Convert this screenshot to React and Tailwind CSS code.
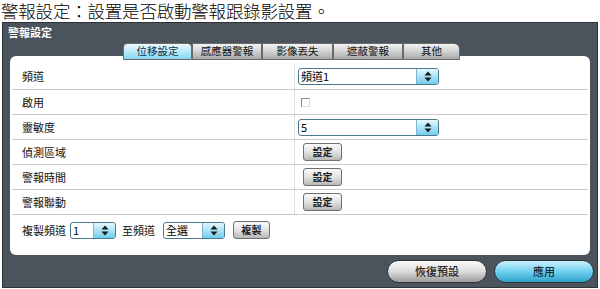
import React from "react";

const font = { fontFamily: '"Noto Sans CJK TC", "Noto Sans", sans-serif' };

function Arrows() {
  return (
    <svg width="8" height="11" viewBox="0 0 8 11">
      <path d="M4 0.5 L7.5 4.5 L0.5 4.5 Z" fill="#1a1a1a" />
      <path d="M4 10.5 L7.5 6.5 L0.5 6.5 Z" fill="#1a1a1a" />
    </svg>
  );
}

function Select({ value, w }) {
  return (
    <div
      className="flex h-[17px] items-stretch overflow-hidden rounded-[3px] border border-[#4a7890] bg-white"
      style={{ width: w }}
    >
      <div className="flex flex-1 items-center pl-[2px] text-[11px] leading-none text-black">{value}</div>
      <div className="flex w-[22px] items-center justify-center border-l border-[#7fb6cc] bg-gradient-to-b from-[#e6f8ff] via-[#a9e3f7] to-[#6fcdef]">
        <Arrows />
      </div>
    </div>
  );
}

function SmallBtn({ label, w = "w-[39px]" }) {
  return (
    <div
      className={`flex h-[18px] ${w} items-center justify-center rounded-[3px] border border-[#6e6e6e] bg-gradient-to-b from-[#fbfbfb] via-[#e2e2e2] to-[#b8b8b8] text-[10px] font-bold leading-none text-[#222]`}
    >
      {label}
    </div>
  );
}

function Row({ label, children, first }) {
  return (
    <div className={`flex ${first ? "h-[26px]" : "h-[25px]"} border-b border-[#c9c9c9]`}>
      <div className="flex w-[283px] items-center border-r border-[#dedede] pl-[10px] text-[11px] text-[#111]">
        {label}
      </div>
      <div className="flex flex-1 items-center">{children}</div>
    </div>
  );
}

const tabs = [
  { t: "位移設定", w: 69, active: true },
  { t: "感應器警報", w: 70 },
  { t: "影像丟失", w: 71 },
  { t: "遮蔽警報", w: 70 },
  { t: "其他", w: 57 },
];

export default function App() {
  return (
    <div className="h-[289px] w-[600px] overflow-hidden bg-white" style={font}>
      <div className="h-[22px] whitespace-nowrap pl-[1px] text-[17.5px] font-light leading-[21px] tracking-[-0.2px] text-black">
        警報設定：設置是否啟動警報跟錄影設置。
      </div>
      <div className="ml-[2px] flex h-[266px] w-[596px] flex-col border border-[#2e3339] bg-[#4b535c]">
        <div className="h-[20px] pl-[5px] pt-[3px] text-[11px] font-bold leading-[13px] text-white">警報設定</div>
        <div className="relative z-10 -mb-[4px] ml-[120px] flex h-[17px]">
          {tabs.map((tab, i) => (
            <div
              key={i}
              className={`flex items-center justify-center border border-[#6a6a6a] text-[10.5px] leading-none text-[#111] ${
                tab.active
                  ? "rounded-t-[4px] bg-gradient-to-b from-[#eefaff] via-[#b9e9fa] to-[#86d5f1] text-[#10314a]"
                  : "bg-gradient-to-b from-[#f2f2f2] via-[#d2d2d2] to-[#a9a9a9]"
              } ${i === tabs.length - 1 ? "rounded-tr-[6px]" : ""}`}
              style={{ width: tab.w }}
            >
              {tab.t}
            </div>
          ))}
        </div>
        <div className="mx-[7px] flex h-[199px] flex-col rounded-[6px] bg-white px-[2px] pt-[8px]">
          <Row label="頻道" first>
            <div className="pl-[3px]">
              <Select value="頻道1" w={141} />
            </div>
          </Row>
          <Row label="啟用">
            <div className="ml-[6px] h-[9px] w-[9px] border border-[#8a8a8a] border-r-[#d8d8d8] border-b-[#d8d8d8] bg-white" />
          </Row>
          <Row label="靈敏度">
            <div className="pl-[3px]">
              <Select value="5" w={141} />
            </div>
          </Row>
          <Row label="偵測區域">
            <div className="pl-[8px]">
              <SmallBtn label="設定" />
            </div>
          </Row>
          <Row label="警報時間">
            <div className="pl-[8px]">
              <SmallBtn label="設定" />
            </div>
          </Row>
          <Row label="警報聯動">
            <div className="pl-[8px]">
              <SmallBtn label="設定" />
            </div>
          </Row>
          <div className="flex h-[26px] items-end gap-[4px] pb-[2px] pl-[10px] text-[11px] text-[#111]">
            <div className="flex h-[17px] items-center">複製頻道</div>
            <Select value="1" w={46} />
            <div className="ml-[2px] flex h-[17px] items-center">至頻道</div>
            <div className="ml-[4px]">
              <Select value="全選" w={62} />
            </div>
            <div className="ml-[4px]">
              <SmallBtn label="複製" w="w-[37px]" />
            </div>
          </div>
        </div>
        <div className="flex flex-1 items-center justify-end gap-[7px] pr-[3px]">
          <div className="flex h-[23px] w-[100px] items-center justify-center rounded-full border border-[#2e3339] bg-gradient-to-b from-[#fafafa] via-[#dcdcdc] to-[#9c9c9c] text-[11px] font-medium text-[#222]">
            恢復預設
          </div>
          <div className="flex h-[23px] w-[100px] items-center justify-center rounded-full border border-[#2e3339] bg-gradient-to-b from-[#c7f1fd] via-[#6fd0ef] to-[#2aa2c8] text-[11px] font-medium text-[#0f2a3a]">
            應用
          </div>
        </div>
      </div>
    </div>
  );
}
